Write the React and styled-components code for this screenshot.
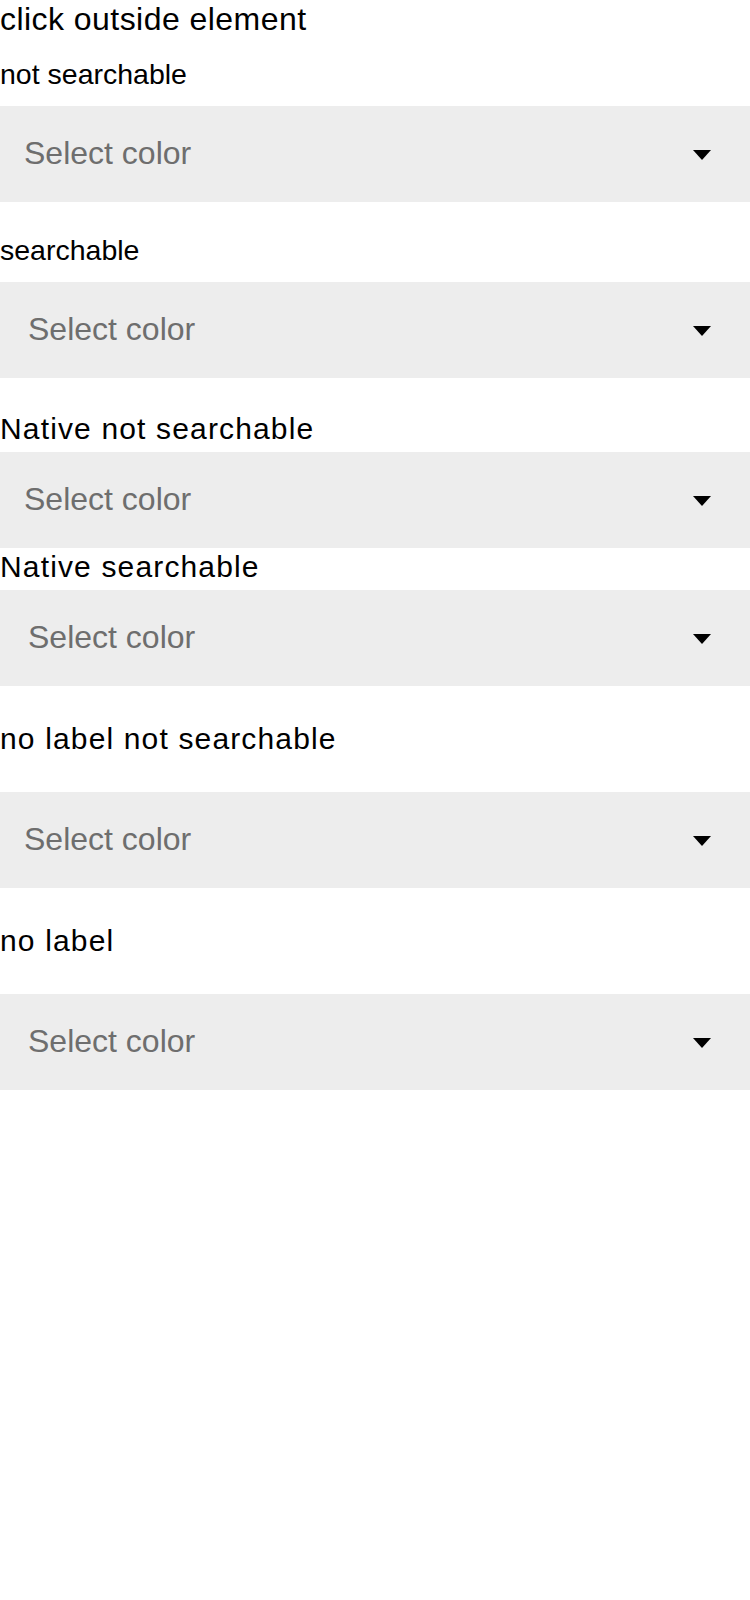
import React from "react";
import styled, { createGlobalStyle } from "styled-components";

const GlobalStyle = createGlobalStyle`
  html, body {
    margin: 0;
    padding: 0;
    background: #ffffff;
  }
  body {
    font-family: "Liberation Sans", Arial, sans-serif;
    color: #000000;
  }
`;

const Page = styled.div`
  display: flex;
  flex-direction: column;
  width: 750px;
`;

const Title = styled.div`
  font-family: "Liberation Sans", Arial, sans-serif;
  font-size: 32px;
  letter-spacing: 0.45px;
  line-height: 36px;
  padding-top: 1px;
  white-space: nowrap;
`;

const Field = styled.div`
  display: flex;
  flex-direction: column;
  gap: ${(p) => p.$gap}px;
  margin-top: ${(p) => p.$top}px;
`;

const SmallLabel = styled.label`
  font-family: "Liberation Sans", Arial, sans-serif;
  font-size: 28.5px;
  line-height: 32px;
  white-space: nowrap;
`;

const WideLabel = styled.div`
  font-family: "Liberation Sans", Arial, sans-serif;
  font-size: 30px;
  letter-spacing: 1.15px;
  line-height: 36px;
  padding-top: 1px;
  white-space: nowrap;
`;

const SelectBox = styled.div`
  display: flex;
  align-items: center;
  justify-content: space-between;
  box-sizing: border-box;
  height: 96px;
  padding: 0 39px 0 ${(p) => (p.$searchable ? 28 : 24)}px;
  background: #ededed;
  cursor: pointer;
`;

const Placeholder = styled.span`
  font-family: "Liberation Sans", Arial, sans-serif;
  font-size: 32px;
  color: #6e6e6e;
  white-space: nowrap;
  margin-bottom: 2px;
`;

const Caret = styled.svg`
  display: block;
  width: 18px;
  height: 10px;
  margin-top: 2px;
`;

function Select({ searchable }) {
  return (
    <SelectBox $searchable={searchable}>
      <Placeholder>Select color</Placeholder>
      <Caret viewBox="0 0 18 10" aria-hidden="true">
        <polygon points="0,0 18,0 9,10" fill="#000" />
      </Caret>
    </SelectBox>
  );
}

export default function App() {
  return (
    <>
      <GlobalStyle />
      <Page>
        <Title>click outside element</Title>

        <Field $top={21} $gap={16}>
          <SmallLabel>not searchable</SmallLabel>
          <Select />
        </Field>

        <Field $top={32} $gap={16}>
          <SmallLabel>searchable</SmallLabel>
          <Select searchable />
        </Field>

        <Field $top={32} $gap={5}>
          <WideLabel>Native not searchable</WideLabel>
          <Select />
        </Field>

        <Field $top={0} $gap={5}>
          <WideLabel>Native searchable</WideLabel>
          <Select searchable />
        </Field>

        <Field $top={34} $gap={35}>
          <WideLabel>no label not searchable</WideLabel>
          <Select />
        </Field>

        <Field $top={34} $gap={35}>
          <WideLabel>no label</WideLabel>
          <Select searchable />
        </Field>
      </Page>
    </>
  );
}
